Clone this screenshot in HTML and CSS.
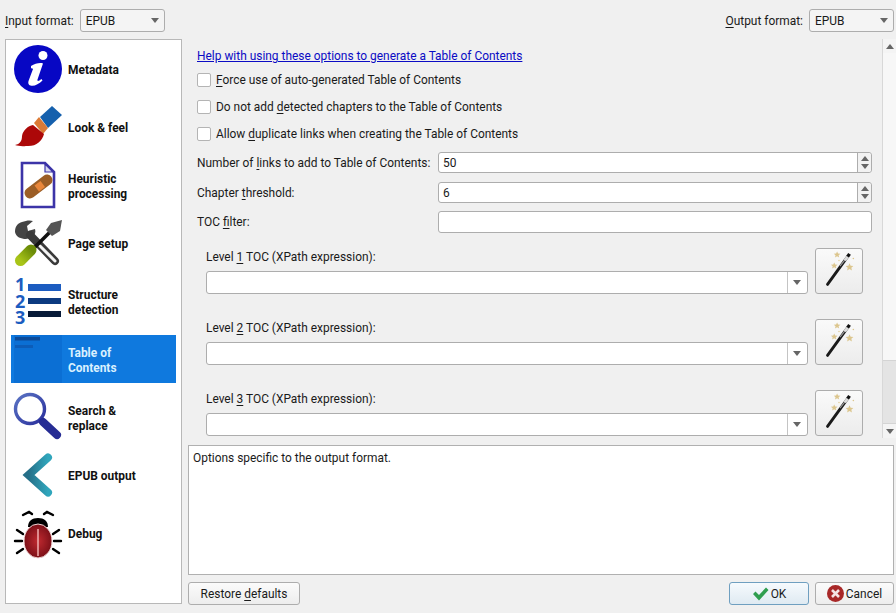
FILE: index.html
```html
<!DOCTYPE html>
<html lang="en">
<head>
<meta charset="utf-8">
<title>Convert</title>
<link rel="stylesheet" href="styles.css">
</head>
<body>
<svg class="defs" width="0" height="0" aria-hidden="true">
  <defs>
    <linearGradient id="arrowg" x1="0" y1="0" x2="1" y2="0"><stop offset="0" stop-color="#256f88"/><stop offset="1" stop-color="#30a6bc"/></linearGradient>
    <linearGradient id="mag" x1="0" y1="0" x2="1" y2="1"><stop offset="0" stop-color="#5a74c4"/><stop offset="1" stop-color="#2a2f9c"/></linearGradient>
    <radialGradient id="bug"><stop offset="0" stop-color="#c02a30"/><stop offset="1" stop-color="#7c1018"/></radialGradient>
    <linearGradient id="handle" x1="0" y1="1" x2="1" y2="0"><stop offset="0" stop-color="#a8c418"/><stop offset="1" stop-color="#6c8c08"/></linearGradient>
    <symbol id="wand" viewBox="0 0 48 46">
      <path d="M12 37 L33 8" stroke="#1a1a1a" stroke-width="3" stroke-linecap="round"/>
      <path d="M25 18 L32 9" stroke="#9a9a9a" stroke-width="1.200"/>
      <path d="M30 12 L33.500 7.500" stroke="#ddd" stroke-width="3"/>
      <path d="M33 8 L35 5" stroke="#111" stroke-width="3.400"/>
      <g fill="#dcc68e">
        <path d="M22 2.500l1 2.300 2.500.2-1.900 1.600.6 2.400-2.200-1.300-2.200 1.300.6-2.400L18.500 5l2.500-.2z"/>
        <path d="M19 14l1 2.300 2.500.2-1.900 1.600.6 2.400-2.200-1.300-2.200 1.300.6-2.400-1.900-1.600 2.500-.2z"/>
        <path d="M35 15l1.200 2.600 2.800.3-2.100 1.800.6 2.800-2.500-1.500-2.500 1.500.6-2.800-2.100-1.800 2.800-.3z"/>
        <circle cx="39" cy="10" r=".8"/><circle cx="24" cy="12" r=".7"/>
      </g>
    </symbol>
  </defs>
</svg>
<div class="dialog">
  <header class="topbar">
    <div class="fmt"><label><u>I</u>nput format:</label><div class="combo fmtcombo"><span>EPUB</span><i class="arrow"></i></div></div>
    <div class="fmt"><label><u>O</u>utput format:</label><div class="combo fmtcombo"><span>EPUB</span><i class="arrow"></i></div></div>
  </header>
  <div class="main">
    <nav class="sidebar">
      <div class="item">
        <svg class="ico" viewBox="0 0 48 48"><circle cx="24" cy="24" r="24" fill="#0707c4"/><circle cx="29" cy="10.500" r="4.500" fill="#fff"/><path d="M17 21c4-2.500 9-3.500 12-2.500l-5.500 16c-.5 2 1 2 4-.5l1 1.500c-4 4-8.500 6-12 5-2.500-.8-2.500-3-1.800-5l4.300-11.500c-.5-1-1.500-1-2-.5z" fill="#fff"/></svg>
        <span>Metadata</span>
      </div>
      <div class="item">
        <svg class="ico" viewBox="0 0 48 48"><path d="M38 3l10 9-14 13-8-11z" fill="#1560ad"/><path d="M25 14l9 11-5 6-9-11z" fill="#dc7a35"/><path d="M19 22l11 9c-2 7-8 13-18 12-4 .5-8 0-11-1 5-1 7-4 7-9 1-6 6-10 11-11z" fill="#ac0808"/></svg>
        <span>Look &amp; feel</span>
      </div>
      <div class="item">
        <svg class="ico" viewBox="0 0 48 48"><path d="M8 2h23l9 9v35H8z" fill="#fff" stroke="#3c34a8" stroke-width="2.600"/><path d="M31 3v8h8z" fill="#d8d8f0" stroke="#3c34a8" stroke-width="1.200"/><path d="M16 32L33 19" stroke="#9c5e26" stroke-width="11" stroke-linecap="round"/><path d="M20.500 24.500l6-4.500 4.500 6-6 4.500z" fill="#e9863a"/></svg>
        <span>Heuristic<br>processing</span>
      </div>
      <div class="item">
        <svg class="ico" viewBox="0 0 48 48"><path d="M1 13C1 7 4 4 8 3c4-1.500 8-2 11-1l-6 5 1 5 7-2c1 3 0 6-3 8l-2 1-4 1C7 20 2 18 1 13z" fill="#444"/><path d="M16 16L41 42" stroke="#3a3a3a" stroke-width="8" stroke-linecap="round"/><path d="M26 27L41 42" stroke="#f4f4f4" stroke-width="3" stroke-linecap="round"/><path d="M19 30L36 13" stroke="#111" stroke-width="3.600"/><path d="M48 1l-2 11-8 5-6-6 5-7z" fill="#555"/><path d="M6.500 41.500L17 31" stroke="url(#handle)" stroke-width="11" stroke-linecap="round"/></svg>
        <span>Page setup</span>
      </div>
      <div class="item">
        <svg class="ico" viewBox="0 0 48 48"><rect x="14" y="7" width="33" height="7" fill="#1c5cc0"/><rect x="14" y="21" width="33" height="6" fill="#0c3a80"/><rect x="14" y="34" width="33" height="6" fill="#071a38"/><text class="num" x="1" y="14">1</text><text class="num" x="1" y="31">2</text><text class="num" x="1" y="47">3</text></svg>
        <span>Structure<br>detection</span>
      </div>
      <div class="item selected">
        <svg class="ico" viewBox="0 0 48 48"><rect x="0" y="0" width="48" height="48" fill="#0b6fd4"/><rect x="1" y="2" width="25" height="3.500" fill="#0c4a98"/><rect x="1" y="10" width="18" height="3" fill="#0c5cb8"/></svg>
        <span>Table of<br>Contents</span>
      </div>
      <div class="item">
        <svg class="ico" viewBox="0 0 48 48"><circle cx="16" cy="16" r="14.500" fill="#fff" stroke="url(#mag)" stroke-width="3.400"/><path d="M29 29L43 42" stroke="#262c94" stroke-width="8" stroke-linecap="round"/></svg>
        <span>Search &amp;<br>replace</span>
      </div>
      <div class="item">
        <svg class="ico" viewBox="0 0 48 48"><path d="M34 6.500L14.500 24 34 41.500" fill="none" stroke="url(#arrowg)" stroke-width="8" stroke-linecap="round" stroke-linejoin="miter"/></svg>
        <span>EPUB output</span>
      </div>
      <div class="item">
        <svg class="ico" viewBox="0 0 48 48"><g stroke="#000" stroke-width="2.400" stroke-linecap="round" fill="none"><path d="M9 6l6-3 3 2M39 6l-6-3-3 2M3 21l6 4M45 21l-6 4M1 32h7M47 32h-7M3 44l6-4M45 44l-6-4"/></g><path d="M14 18c0-6 4-9 10-9s10 3 10 9z" fill="#000"/><ellipse cx="24" cy="32" rx="14" ry="17" fill="url(#bug)" stroke="#f0d8d8" stroke-width="1"/><path d="M24 20v27" stroke="#f0b0b0" stroke-width="1.500"/></svg>
        <span>Debug</span>
      </div>
    </nav>
    <div class="content">
      <section class="panel">
        <div class="form">
          <a class="help" href="#">Help with using these options to generate a Table of Contents</a>
          <div class="check"><i class="box"></i><span><u>F</u>orce use of auto-generated Table of Contents</span></div>
          <div class="check"><i class="box"></i><span>Do not add <u>d</u>etected chapters to the Table of Contents</span></div>
          <div class="check"><i class="box"></i><span>Allow <u>d</u>uplicate links when creating the Table of Contents</span></div>
          <div class="row r1"><label>Number of <u>l</u>inks to add to Table of Contents:</label><div class="spin"><span>50</span><div class="steps"><i class="up"></i><i class="down"></i></div></div></div>
          <div class="row r2"><label>Chapter <u>t</u>hreshold:</label><div class="spin"><span>6</span><div class="steps"><i class="up"></i><i class="down"></i></div></div></div>
          <div class="row r3"><label>TOC <u>f</u>ilter:</label><div class="field"></div></div>
          <div class="level first">
            <div class="levelmain"><label>Level <u>1</u> TOC (XPath expression):</label><div class="combo xpath"><span></span><i class="arrow"></i></div></div>
            <button class="wand"><svg width="46" height="44" viewBox="0 0 46 44"><use href="#wand" width="46" height="44"/></svg></button>
          </div>
          <div class="level">
            <div class="levelmain"><label>Level <u>2</u> TOC (XPath expression):</label><div class="combo xpath"><span></span><i class="arrow"></i></div></div>
            <button class="wand"><svg width="46" height="44" viewBox="0 0 46 44"><use href="#wand" width="46" height="44"/></svg></button>
          </div>
          <div class="level">
            <div class="levelmain"><label>Level <u>3</u> TOC (XPath expression):</label><div class="combo xpath"><span></span><i class="arrow"></i></div></div>
            <button class="wand"><svg width="46" height="44" viewBox="0 0 46 44"><use href="#wand" width="46" height="44"/></svg></button>
          </div>
        </div>
        <div class="scrollbar">
          <div class="sbtn"><i class="up"></i></div>
          <div class="track"></div>
          <div class="thumb"></div>
          <div class="sbtn"><i class="down"></i></div>
        </div>
      </section>
      <div class="desc">Options specific to the output format.</div>
      <footer class="buttons">
        <button class="btn restore"><span>Restore <u>d</u>efaults</span></button>
        <div class="right">
          <button class="btn ok"><svg width="17" height="14" viewBox="0 0 17 14"><path d="M1 7l2.500-2.500 3.500 3.500 7-7.500 2.500 2.500-9.500 10.500z" fill="#2f9e4f"/></svg><span>OK</span></button>
          <button class="btn cancel"><svg width="17" height="17" viewBox="0 0 17 17"><circle cx="8.500" cy="8.500" r="8.500" fill="#a82828"/><path d="M5 5l7 7M12 5l-7 7" stroke="#f4e4e4" stroke-width="2.600"/></svg><span>Cancel</span></button>
        </div>
      </footer>
    </div>
  </div>
</div>
</body>
</html>
```
FILE: styles.css
```css
* { box-sizing: border-box; }
html, body { margin: 0; padding: 0; }
body {
  width: 896px;
  height: 613px;
  overflow: hidden;
  background: #f0f0f0;
  color: #1a1a1a;
  font: 11.93px/16px Roboto, "Open Sans", sans-serif;
}
.defs { display: block; height: 0; }
u { text-decoration-thickness: 1px; text-underline-offset: 2px; }
i { display: block; }
label { white-space: nowrap; }
.dialog { display: flex; flex-direction: column; height: 613px; padding: 9px 2px 8px 5px; }

.topbar { display: flex; justify-content: space-between; height: 23px; flex: none; }
.fmt { display: flex; align-items: center; gap: 6px; }
.combo {
  display: flex;
  align-items: center;
  justify-content: space-between;
  border: 1px solid #adadad;
  border-radius: 3px;
  background: #f4f4f4;
}
.fmtcombo { width: 85px; height: 23px; padding: 0 5px; }
.arrow, .down {
  width: 0; height: 0;
  border-left: 4px solid transparent;
  border-right: 4px solid transparent;
  border-top: 5px solid #666;
}
.up {
  width: 0; height: 0;
  border-left: 4px solid transparent;
  border-right: 4px solid transparent;
  border-bottom: 5px solid #666;
}

.main { display: flex; flex: 1; min-height: 0; margin-top: 7px; gap: 6px; }
.sidebar {
  width: 177px;
  flex: none;
  height: 565px;
  border: 1px solid #b8b8b8;
  background: #fff;
  padding: 5px;
  display: flex;
  flex-direction: column;
  gap: 10px;
}
.item {
  height: 48px;
  flex: none;
  display: flex;
  align-items: center;
  gap: 6px;
  padding-left: 3px;
  font-weight: 700;
  line-height: 15px;
  color: #111;
}
.item span { margin-top: 3px; }
.ico { width: 48px; height: 48px; flex: none; overflow: visible; }
.num { font: 700 18px "Open Sans", sans-serif; fill: #1c5cc0; }
.selected { background: #0f79de; color: #d9f1ff; }

.content { flex: 1; display: flex; flex-direction: column; min-width: 0; }
.panel { height: 399px; flex: none; display: flex; margin-right: -2px; }
.form { flex: 1; padding: 8px 10px 0 9px; min-width: 0; }
.help { display: block; height: 18px; line-height: 18px; color: #0b0bc4; text-decoration: underline; }
.check { display: flex; align-items: center; gap: 5px; height: 14px; margin-top: 13px; }
.help + .check { margin-top: 8px; }
.box { width: 14px; height: 14px; background: #fff; border: 1px solid #b4b4b4; border-radius: 2px; flex: none; }
.row { display: flex; align-items: center; justify-content: space-between; }
.r1 { margin-top: 11px; height: 21px; }
.r2 { margin-top: 9px; height: 21px; }
.r3 { margin-top: 8px; height: 22px; }
.spin, .field {
  width: 434px;
  flex: none;
  height: 100%;
  background: #fff;
  border: 1px solid #adadad;
  border-radius: 3px;
  display: flex;
  align-items: center;
  justify-content: space-between;
  padding-left: 4px;
}
.steps {
  width: 14px;
  height: 100%;
  border-left: 1px solid #adadad;
  background: #f2f2f2;
  display: flex;
  flex-direction: column;
  align-items: center;
  justify-content: center;
  gap: 3px;
  border-radius: 0 3px 3px 0;
}
.level { display: flex; align-items: flex-end; gap: 7px; margin: 25px 0 0 9px; height: 46px; width: 657px; }
.level.first { margin-top: 15px; }
.levelmain { width: 602px; }
.levelmain label { display: block; height: 16px; margin-bottom: 6px; }
.xpath { height: 23px; background: #fff; justify-content: flex-end; }
.xpath .arrow { margin-right: 6px; }
.xpath span { flex: 1; height: 100%; border-right: 1px solid #c4c4c4; margin-right: 5px; }
.wand {
  width: 48px;
  height: 46px;
  padding: 0;
  border: 1px solid #adadad;
  border-radius: 3px;
  background: linear-gradient(#fafafa, #ececec);
  flex: none;
}
.wand svg { display: block; }

.scrollbar { width: 14px; flex: none; display: flex; flex-direction: column; background: #f7f7f7; border-left: 1px solid #d8d8d8; }
.sbtn { height: 14px; flex: none; display: flex; align-items: center; justify-content: center; background: #f4f4f4; }
.track { flex: 1; }
.thumb { height: 64px; flex: none; background: #e4e4e4; border-top: 1px solid #d4d4d4; border-bottom: 1px solid #d4d4d4; }

.desc {
  height: 130px;
  flex: none;
  margin-top: 7px;
  background: #fff;
  border: 1px solid #b0b0b0;
  padding: 4px;
}
.buttons { display: flex; justify-content: space-between; margin-top: 7px; height: 23px; }
.right { display: flex; gap: 6px; }
.btn {
  font: inherit;
  color: inherit;
  height: 23px;
  padding: 0;
  border: 1px solid #adadad;
  border-radius: 3px;
  background: linear-gradient(#fbfbfb, #ededed);
  display: flex;
  align-items: center;
  justify-content: center;
  gap: 2px;
}
.restore { width: 112px; }
.ok { width: 80px; border-color: #6f9fc0; background: linear-gradient(#f6fafd, #dfeaf2); }
.cancel { width: 79px; }
```
